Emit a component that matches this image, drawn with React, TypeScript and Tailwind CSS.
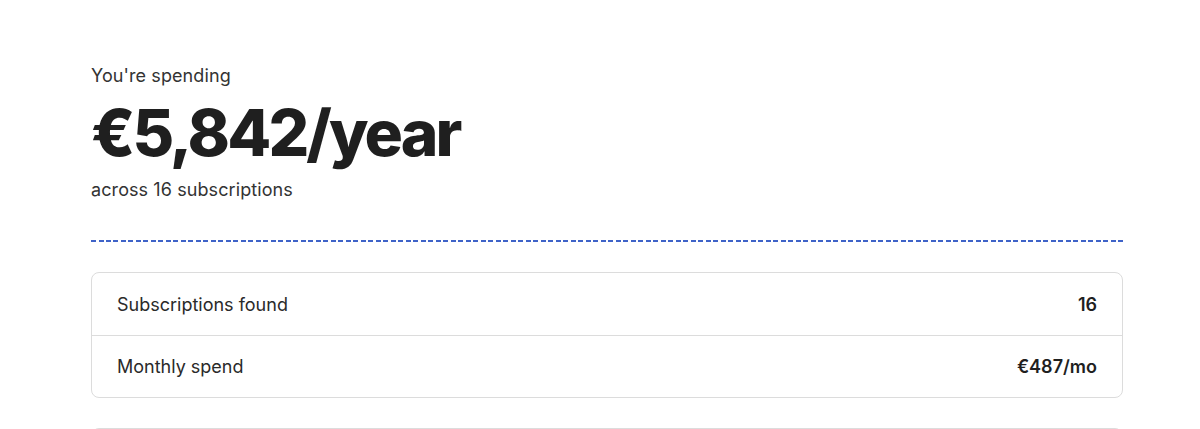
const rows = [
  { label: 'Subscriptions found', value: '16' },
  { label: 'Monthly spend', value: '€487/mo' },
];

export default function App() {
  return (
    <div className="min-h-[429px] bg-white pl-[91px] pt-[64px] font-['Inter',sans-serif] text-[#222]">
      <div className="w-[1032px]">
        <p className="text-[18px] leading-[24px] tracking-[0.005em] text-[#333]">You're spending</p>
        <h1 className="mt-[7px] text-[64px] leading-[76px] font-extrabold tracking-[-0.045em] text-[#1f1f1f]">
          €5,842/year
        </h1>
        <p className="mt-[7px] text-[18px] leading-[24px] tracking-[0.005em] text-[#333]">across 16 subscriptions</p>
        <div className="mt-[38px] h-[2px] bg-[repeating-linear-gradient(90deg,#3f63c8_0_5px,transparent_5px_7.5px)]" />
        <div className="mt-[30px] rounded-lg border border-[#dcdcdc]">
          {rows.map((row, i) => (
            <div
              key={row.label}
              className={`flex h-[62px] items-center justify-between px-[25px] text-[18px] ${i > 0 ? 'border-t border-[#dcdcdc]' : ''}`}
            >
              <span className="text-[#2a2a2a]">{row.label}</span>
              <span className="font-semibold text-[#1f1f1f]">{row.value}</span>
            </div>
          ))}
        </div>
        <div className="mt-[30px] h-[60px] rounded-lg border border-[#dcdcdc]" />
      </div>
    </div>
  );
}
